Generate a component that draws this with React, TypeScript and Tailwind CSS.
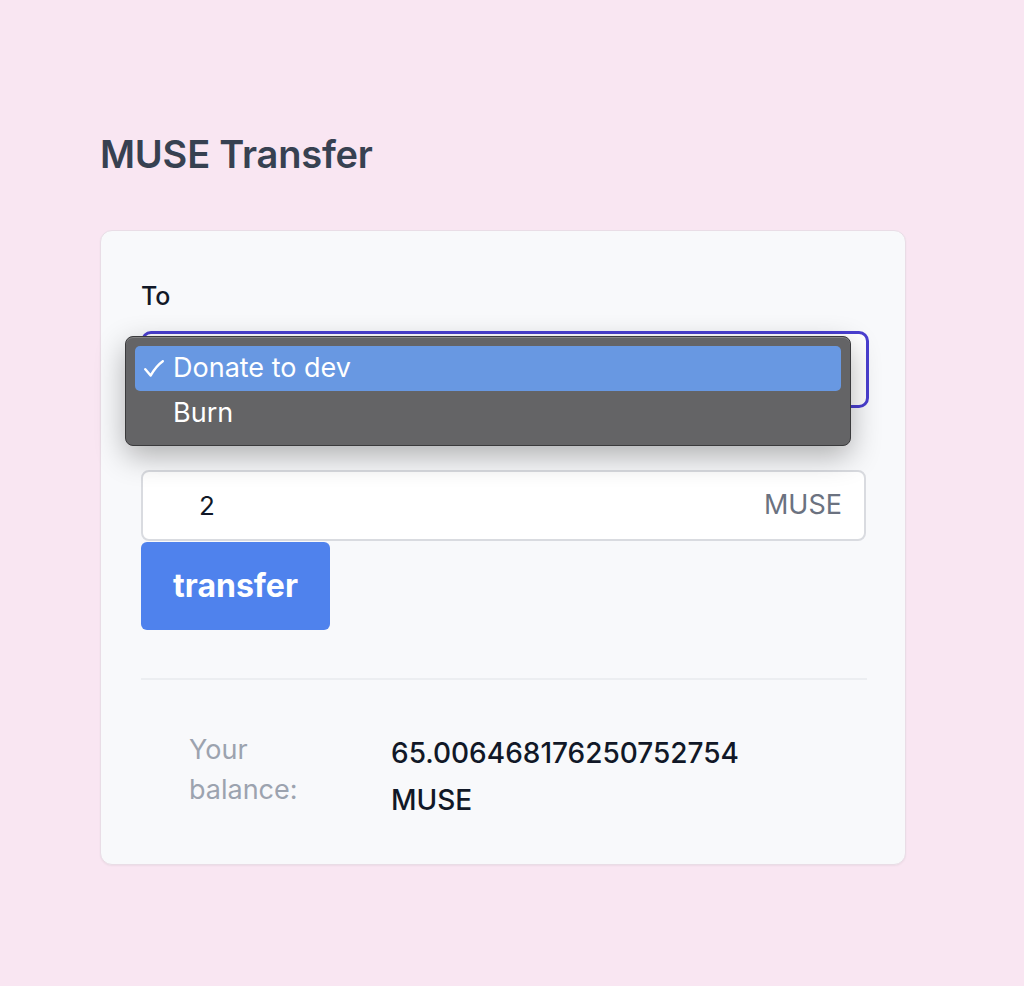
import React, { useState } from 'react';

const options = ['Donate to dev', 'Burn'];

const App: React.FC = () => {
  const [selected] = useState(0);
  const [amount, setAmount] = useState('2');

  return (
    <div className="min-h-[986px] bg-[#f9e6f2] pt-[126px] font-['Inter',sans-serif]">
      <div className="ml-[100px] w-[806px]">
        {/* Header */}
        <h1 className="text-[38px] leading-[56px] font-semibold text-[#374151] tracking-[-0.2px]">MUSE Transfer</h1>

        {/* Card */}
        <div className="mt-[48px] rounded-xl border border-[#e9dde6] bg-[#f8f9fb] px-10 pt-[50px] pb-[40px] shadow-[0_1px_2px_rgba(0,0,0,0.05)]">
          <label className="block text-[25px] leading-[30px] font-medium text-[#111827]">To</label>

          {/* Select with open menu */}
          <div className="relative mt-[20px]">
            <div className="h-[77px] w-[728px] rounded-[10px] border-[3px] border-[#4a3fd0] bg-white" />
            <div className="absolute left-[-16px] top-[5px] w-[726px] rounded-lg border border-[#3a3a3c] bg-[#646466] p-[9px] shadow-[0_10px_30px_rgba(0,0,0,0.3),inset_0_1px_0_rgba(255,255,255,0.2)]">
              {options.map((o, i) => (
                <div
                  key={o}
                  className={
                    i === selected
                      ? 'flex h-[45px] items-center rounded-[5px] bg-[#6898e2] text-[27px] text-white'
                      : 'flex h-[45px] items-center text-[27px] text-white'
                  }
                >
                  <span className="flex w-[38px] pl-[9px]">
                    {i === selected && (
                      <svg width="20" height="17" viewBox="0 0 20 17" fill="none">
                        <path d="M1.3 9.2 L6.6 15.6 Q12 6 18.8 1.2" stroke="white" strokeWidth="2.4" strokeLinecap="round" strokeLinejoin="round" />
                      </svg>
                    )}
                  </span>
                  <span>{o}</span>
                </div>
              ))}
            </div>
          </div>

          {/* Amount */}
          <div className="mt-[62px] flex h-[71px] w-[725px] items-center rounded-lg border-2 border-[#d9dbe0] bg-white pl-[56px] pr-[22px]">
            <input
              value={amount}
              onChange={e => setAmount(e.target.value)}
              className="flex-1 bg-transparent text-[26px] text-[#111827] outline-none"
            />
            <span className="text-[27px] text-[#6b7280]">MUSE</span>
          </div>

          <button className="mt-px h-[88px] w-[189px] rounded-md bg-[#4f82ed] text-[32px] font-bold text-white">
            transfer
          </button>

          <div className="mt-[48px] h-[2px] w-[726px] bg-[#eceef1]" />

          {/* Balance */}
          <div className="mt-[50px] flex pl-[48px]">
            <div className="w-[202px] text-[27px] leading-[40px] text-[#9ca3af]">
              Your
              <br />
              balance:
            </div>
            <div className="text-[28px] leading-[47px] font-medium text-[#111827]">
              65.006468176250752754
              <br />
              MUSE
            </div>
          </div>
        </div>
      </div>
    </div>
  );
};

export default App;
